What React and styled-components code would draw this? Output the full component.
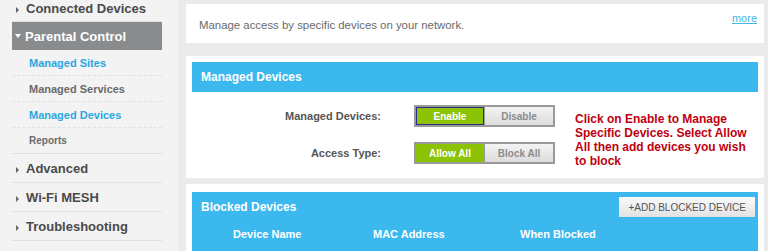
import styled, { createGlobalStyle } from "styled-components";

const Global = createGlobalStyle`
  html, body { margin: 0; padding: 0; }
  body {
    background: #ebebeb;
    font-family: "Liberation Sans", Arial, sans-serif;
    overflow: hidden;
  }
`;

const Page = styled.div`
  display: flex;
  height: 251px;
  overflow: hidden;
`;

const Sidebar = styled.nav`
  width: 178px;
  flex: none;
  background: #f3f3f3;
  padding: 0 16px 0 12px;
  box-sizing: border-box;
  margin-top: -5px;
`;

const MenuItem = styled.div`
  display: flex;
  align-items: center;
  height: ${p => p.h || 29}px;
  box-sizing: border-box;
  padding-left: 3px;
  font-size: 13px;
  font-weight: bold;
  white-space: nowrap;
  color: ${p => (p.active ? "#fff" : "#4a4a4a")};
  background: ${p => (p.active ? "#898b8d" : "transparent")};
  border-bottom: ${p => (p.active ? "none" : "1px solid #e2e2e2")};
`;

const Arrow = styled.span`
  width: 0;
  height: 0;
  margin-right: 7px;
  ${p =>
    p.open
      ? `border-left: 3px solid transparent; border-right: 3px solid transparent; border-top: 4px solid #fff; margin-right:4px;`
      : `border-top: 3px solid transparent; border-bottom: 3px solid transparent; border-left: 3px solid #666; margin-left:1px; margin-top:3px;`}
`;

const SubItem = styled.div`
  display: flex;
  align-items: center;
  height: 26px;
  box-sizing: border-box;
  padding-left: 17px;
  font-size: ${p => (p.small ? 10 : 11)}px;
  font-weight: bold;
  color: ${p => (p.link ? "#2ba6df" : "#6a6a6a")};
  border-bottom: 1px dashed #e0e0e0;
  ${p => p.last && "border-bottom: 1px solid #e0e0e0;"}
`;

const Main = styled.main`
  flex: 1;
  min-width: 0;
  padding: 4px 4px 0 8px;
  display: flex;
  flex-direction: column;
  gap: 13px;
`;

const Card = styled.section`
  background: #fff;
  padding: ${p => p.pad || "6px 6px 0"};
  height: ${p => p.h}px;
  box-sizing: border-box;
  margin-top: ${p => p.mt || 0}px;
  flex: none;
`;

const Intro = styled.div`
  display: flex;
  justify-content: space-between;
  align-items: flex-start;
  padding: 15px 7px 0 13px;
  font-size: 11.4px;
  color: #6a6a6a;
`;

const More = styled.a`
  color: #49b6e6;
  text-decoration: underline;
  font-size: 11px;
  margin-top: -7px;
`;

const Header = styled.div`
  background: #3bb8ee;
  color: #fff;
  font-weight: bold;
  font-size: 12px;
  height: ${p => p.h || 30}px;
  padding: 0 9px;
  box-sizing: border-box;
  display: flex;
  align-items: center;
`;

const HeaderBar = styled.div`
  display: flex;
  align-items: center;
  justify-content: space-between;
  height: ${p => p.h}px;
`;

const Body = styled.div`
  display: flex;
  padding-top: 13px;
`;

const Form = styled.div`
  display: flex;
  flex-direction: column;
  gap: 15px;
  flex: none;
`;

const Row = styled.div`
  display: flex;
  align-items: center;
`;

const Label = styled.div`
  width: 222px;
  box-sizing: border-box;
  text-align: right;
  font-size: 11px;
  font-weight: bold;
  color: #555;
  padding-right: 33px;
`;

const Toggle = styled.div`
  display: flex;
  border: 2px solid #9a9a9a;
  background: #9a9a9a;
  gap: 1px;
`;

const ToggleBtn = styled.div`
  width: 68px;
  height: 18px;
  box-sizing: border-box;
  display: flex;
  align-items: center;
  justify-content: center;
  font-size: 10px;
  font-weight: bold;
  color: ${p => (p.on ? "#fff" : "#8c8c8c")};
  background: ${p =>
    p.on ? "#8cc304" : "linear-gradient(#f4f4f4, #dcdcdc)"};
  border: ${p => (p.focus ? "1px solid #2a2a8a" : "none")};
`;

const Note = styled.div`
  margin-left: 20px;
  margin-top: 7px;
  width: 182px;
  color: #c0000e;
  font-weight: bold;
  font-size: 12px;
  line-height: 14px;
`;

const AddButton = styled.button`
  font-family: inherit;
  font-size: 10px;
  color: #555;
  background: linear-gradient(#fafafa, #e2e2e2);
  border: none;
  height: 20px;
  padding: 0 9px;
  margin-right: -6px;
`;

const Columns = styled.div`
  display: flex;
  font-size: 11px;
  font-weight: bold;
  color: #fff;
  padding-left: 32px;
  margin-top: 11px;
`;

const Col = styled.div`
  width: ${p => p.w}px;
`;

const TableHeader = styled(Header)`
  height: 62px;
  display: block;
  padding-top: 5px;
`;

export default function App() {
  return (
    <>
      <Global />
      <Page>
        <Sidebar>
          <MenuItem h={27}>
            <Arrow />
            Connected Devices
          </MenuItem>
          <MenuItem active h={28}>
            <Arrow open />
            Parental Control
          </MenuItem>
          <SubItem link>Managed Sites</SubItem>
          <SubItem>Managed Services</SubItem>
          <SubItem link>Managed Devices</SubItem>
          <SubItem small last>Reports</SubItem>
          <MenuItem>
            <Arrow />
            Advanced
          </MenuItem>
          <MenuItem>
            <Arrow />
            Wi-Fi MESH
          </MenuItem>
          <MenuItem>
            <Arrow />
            Troubleshooting
          </MenuItem>
          <MenuItem>
            <Arrow />
            More Information
          </MenuItem>
        </Sidebar>
        <Main>
          <Card h={39} pad="0">
            <Intro>
              <span>Manage access by specific devices on your network.</span>
              <More href="#">more</More>
            </Intro>
          </Card>
          <Card h={122}>
            <Header>Managed Devices</Header>
            <Body>
              <Form>
                <Row>
                  <Label>Managed Devices:</Label>
                  <Toggle>
                    <ToggleBtn on focus>Enable</ToggleBtn>
                    <ToggleBtn>Disable</ToggleBtn>
                  </Toggle>
                </Row>
                <Row>
                  <Label>Access Type:</Label>
                  <Toggle>
                    <ToggleBtn on>Allow All</ToggleBtn>
                    <ToggleBtn>Block All</ToggleBtn>
                  </Toggle>
                </Row>
              </Form>
              <Note>
                Click on Enable to Manage Specific Devices. Select Allow All
                then add devices you wish to block
              </Note>
            </Body>
          </Card>
          <Card h={80} mt={-7} pad="8px 6px 0">
            <TableHeader>
              <HeaderBar h={20}>
                <span>Blocked Devices</span>
                <AddButton>+ADD BLOCKED DEVICE</AddButton>
              </HeaderBar>
              <Columns>
                <Col w={140}>Device Name</Col>
                <Col w={147}>MAC Address</Col>
                <Col w={120}>When Blocked</Col>
              </Columns>
            </TableHeader>
          </Card>
        </Main>
      </Page>
    </>
  );
}
